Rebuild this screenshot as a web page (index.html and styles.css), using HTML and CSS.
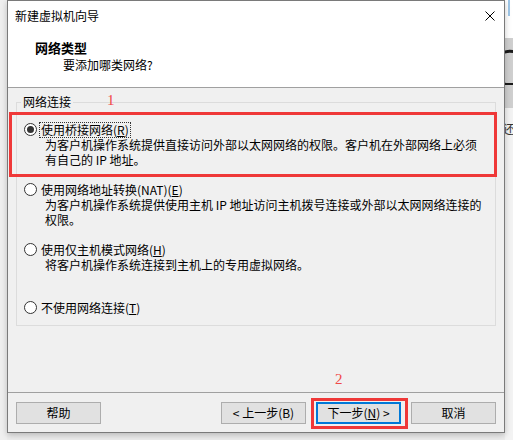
FILE: index.html
```html
<!DOCTYPE html>
<html lang="zh-CN">
<head>
<meta charset="utf-8">
<title>新建虚拟机向导</title>
<link rel="stylesheet" href="styles.css">
</head>
<body>
<div class="screen">
  <div class="gap-left"></div>
  <div class="dialog">
    <div class="titlebar">
      <span class="title">新建虚拟机向导</span>
      <span class="close">
        <svg width="10" height="10" viewBox="0 0 10 10"><path d="M0.5 0.5 L9.5 9.5 M9.5 0.5 L0.5 9.5" stroke="#000" stroke-width="1" fill="none"/></svg>
      </span>
    </div>
    <div class="header">
      <div class="h-title">网络类型</div>
      <div class="h-sub">要添加哪类网络?</div>
    </div>
    <div class="body">
      <fieldset class="group">
        <legend class="group-label">网络连接</legend>
        <div class="options">
          <div class="option">
            <div class="row"><span class="radio checked"></span><span class="label focus">使用桥接网络(<u>R</u>)</span></div>
            <div class="desc">为客户机操作系统提供直接访问外部以太网网络的权限。客户机在外部网络上必须<br>有自己的 IP 地址。</div>
          </div>
          <div class="option">
            <div class="row"><span class="radio"></span><span class="label">使用网络地址转换(NAT)(<u>E</u>)</span></div>
            <div class="desc">为客户机操作系统提供使用主机 IP 地址访问主机拨号连接或外部以太网网络连接的<br>权限。</div>
          </div>
          <div class="option tall">
            <div class="row"><span class="radio"></span><span class="label">使用仅主机模式网络(<u>H</u>)</span></div>
            <div class="desc">将客户机操作系统连接到主机上的专用虚拟网络。</div>
          </div>
          <div class="option">
            <div class="row"><span class="radio"></span><span class="label">不使用网络连接(<u>T</u>)</span></div>
          </div>
        </div>
      </fieldset>
    </div>
    <div class="footer">
      <button class="btn">帮助</button>
      <button class="btn push">&lt; 上一步(B)</button>
      <button class="btn default">下一步(<u>N</u>) &gt;</button>
      <button class="btn">取消</button>
    </div>
    <div class="mark mark1"></div>
    <div class="num num1">1</div>
    <div class="mark mark2"></div>
    <div class="num num2">2</div>
  </div>
  <div class="gap-right">
    <svg width="8" height="440" viewBox="0 0 8 440">
      <rect x="0" y="0" width="8" height="38" fill="#ffffff"/>
      <rect x="3" y="0" width="2" height="16" fill="#9fc7e8"/>
      <rect x="0" y="38" width="8" height="70" fill="#cfcfcf"/>
      <path d="M10 52 A 16 16 0 0 0 0 84 " stroke="#1a1a1a" stroke-width="3" fill="none"/>
      <path d="M0 84 L8 84" stroke="#1a1a1a" stroke-width="2"/>
      <rect x="0" y="108" width="8" height="332" fill="#f3f3f3"/>
      <text x="-2" y="134" font-size="12" font-family="Noto Sans CJK SC" fill="#333">还</text>
    </svg>
  </div>
</div>
</body>
</html>
```
FILE: styles.css
```css
* { box-sizing: border-box; }
html, body {
  margin: 0;
  padding: 0;
}
body {
  width: 513px;
  height: 440px;
  overflow: hidden;
  background: #ececec;
  font-family: "Noto Sans CJK SC", "Microsoft YaHei", sans-serif;
  font-size: 12px;
  color: #000;
}
.screen {
  display: flex;
  height: 440px;
}
.gap-left {
  width: 7px;
  flex: none;
  background: #efefef;
}
.gap-right {
  width: 8px;
  flex: none;
  overflow: hidden;
}
.gap-right svg { display: block; }
.dialog {
  position: relative;
  width: 498px;
  height: 433px;
  flex: none;
  border: 1px solid #7a7a7a;
  background: #f0f0f0;
  display: flex;
  flex-direction: column;
  box-shadow: 0 2px 6px rgba(0, 0, 0, 0.22);
}
.titlebar {
  height: 29px;
  background: #fff;
  display: flex;
  align-items: center;
  padding-left: 7px;
  flex: none;
}
.title {
  line-height: 16px;
  flex: 1;
}
.close {
  width: 28px;
  height: 29px;
  display: flex;
  align-items: center;
  justify-content: center;
}
.close svg { display: block; }
.header {
  background: #fff;
  padding: 10px 0 14px 0;
  border-bottom: 1px solid #a0a0a0;
  flex: none;
}
.h-title {
  font-size: 13px;
  font-weight: bold;
  line-height: 16px;
  padding-left: 27px;
}
.h-sub {
  line-height: 16px;
  margin-top: 1px;
  padding-left: 55px;
}
.body {
  flex: 1;
  padding: 6px 8px 0 8px;
}
.group {
  margin: 0;
  padding: 0 0 10px 0;
  border: 1px solid #dcdcdc;
  min-width: 0;
}
.group-label {
  margin-left: 4px;
  padding: 0 2px;
  line-height: 16px;
}
.options {
  padding: 12px 0 0 7px;
  display: flex;
  flex-direction: column;
  gap: 15px;
}
.option.tall { min-height: 43px; }
.row {
  display: flex;
  align-items: center;
  height: 15px;
}
.radio {
  width: 13px;
  height: 13px;
  border: 1px solid #333;
  border-radius: 50%;
  background: #fff;
  margin-right: 2px;
  display: flex;
  align-items: center;
  justify-content: center;
  flex: none;
}
.radio.checked::after {
  content: "";
  width: 7px;
  height: 7px;
  border-radius: 50%;
  background: #333;
}
.label {
  border: 1px dotted transparent;
  padding: 0 1px;
  line-height: 14px;
  white-space: nowrap;
}
.label.focus { border-color: #333; }
.desc {
  margin-left: 21px;
  line-height: 15px;
  white-space: nowrap;
}
u { text-decoration-thickness: 1px; text-underline-offset: 1px; }
.footer {
  flex: none;
  border-top: 1px solid #a0a0a0;
  padding: 9px 8px 8px 8px;
  display: flex;
  gap: 10px;
}
.btn {
  width: 85px;
  height: 22px;
  border: 1px solid #adadad;
  background: #e1e1e1;
  font-family: inherit;
  font-size: 12px;
  color: #000;
  padding: 0;
  line-height: 18px;
}
.btn.push { margin-left: auto; }
.btn.default { border: 2px solid #0078d7; }
.mark {
  position: absolute;
  border: 3px solid #ef3838;
}
.mark1 {
  left: 1px;
  top: 111px;
  width: 488px;
  height: 65px;
}
.mark2 {
  left: 303px;
  top: 397px;
  width: 97px;
  height: 31px;
}
.num {
  position: absolute;
  color: #f04848;
  font-family: "Liberation Serif", serif;
  font-size: 15px;
  line-height: 16px;
}
.num1 { left: 99px; top: 91px; }
.num2 { left: 327px; top: 370px; }
```
